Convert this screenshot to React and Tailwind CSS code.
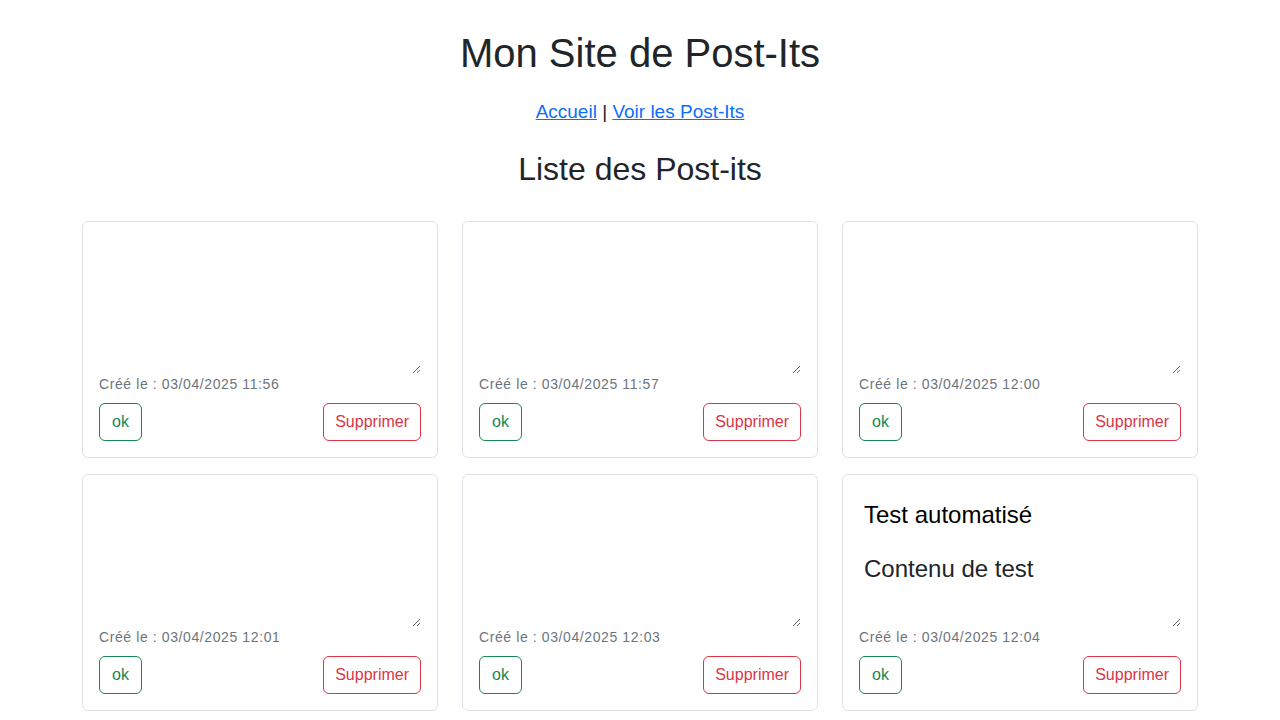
import React from 'react'

const posts = [
  { date: '03/04/2025 11:56' },
  { date: '03/04/2025 11:57' },
  { date: '03/04/2025 12:00' },
  { date: '03/04/2025 12:01' },
  { date: '03/04/2025 12:03' },
  { date: '03/04/2025 12:04', title: 'Test automatisé', content: 'Contenu de test' },
]

function PostIt({ post }) {
  return (
    <div className="border border-[#dee2e6] rounded-[6px] bg-white p-4">
      <div className="flex flex-col h-[136px]">
        <input
          type="text"
          defaultValue={post.title || ''}
          className="h-[46px] w-full px-[5px] pt-[1px] text-[24px] leading-[36px] text-black bg-transparent border-0 outline-none"
        />
        <textarea
          defaultValue={post.content || ''}
          className="flex-1 w-full px-[5px] pt-[14px] text-[24px] leading-[36px] text-[#212529] bg-transparent border-0 outline-none resize-y"
        />
      </div>
      <p className="text-[14px] leading-[21px] tracking-[0.6px] text-[#6c757d] mb-2">Créé le : {post.date}</p>
      <div className="flex justify-between">
        <button className="h-[38px] px-3 border border-[#198754] text-[#198754] rounded-[6px] text-[16px] leading-6">
          ok
        </button>
        <button className="h-[38px] px-[11px] border border-[#dc3545] text-[#dc3545] rounded-[6px] text-[16px] leading-6">
          Supprimer
        </button>
      </div>
    </div>
  )
}

export default function App() {
  return (
    <div className="min-h-screen bg-white text-[#212529] font-['Liberation_Sans',Arial,sans-serif]">
      <h1 className="pt-[29px] text-center text-[40px] leading-[48px]">Mon Site de Post-Its</h1>
      <p className="mt-[23px] text-center text-[19px] leading-6">
        <a href="#" className="text-[#0d6efd] underline">Accueil</a> |{' '}
        <a href="#" className="text-[#0d6efd] underline">Voir les Post-Its</a>
      </p>
      <h2 className="mt-[26px] text-center text-[32px] leading-[38px]">Liste des Post-its</h2>
      <div className="w-[1116px] mx-auto mt-[33px] grid grid-cols-3 gap-x-6 gap-y-4 pb-4">
        {posts.map((p, i) => (
          <PostIt key={i} post={p} />
        ))}
      </div>
    </div>
  )
}
